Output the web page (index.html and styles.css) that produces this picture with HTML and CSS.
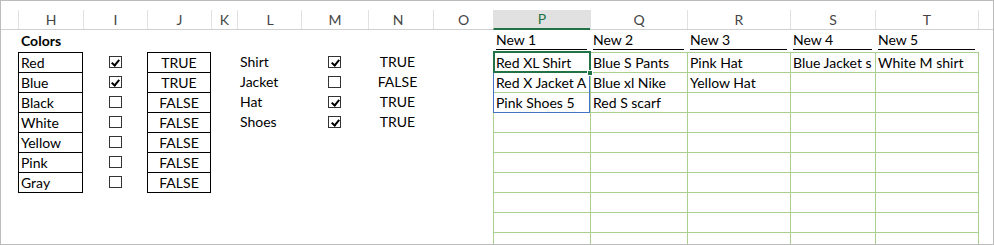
FILE: index.html
```html
<!DOCTYPE html>
<html lang="en">
<head>
    <meta charset="UTF-8">
    <title>Colors</title>
    <link rel="stylesheet" href="styles.css">
</head>
<body>

<div class="sheet">
    <!-- column letters -->
    <div class="row head">
        <div class="c0"></div>
        <div class="h">H</div>
        <div class="i">I</div>
        <div class="j">J</div>
        <div class="k">K</div>
        <div class="l">L</div>
        <div class="m">M</div>
        <div class="n">N</div>
        <div class="o">O</div>
        <div class="p current">P</div>
        <div class="q">Q</div>
        <div class="r">R</div>
        <div class="s">S</div>
        <div class="t">T</div>
        <div class="u"></div>
    </div>

    <div class="row top">
        <div class="h title">Colors</div>
        <div class="p"><span class="hd">New 1</span></div>
        <div class="q"><span class="hd">New 2</span></div>
        <div class="r"><span class="hd">New 3</span></div>
        <div class="s"><span class="hd">New 4</span></div>
        <div class="t"><span class="hd">New 5</span></div>
    </div>

    <div class="row">
        <div class="h box">Red</div>
        <div class="i"><span class="cb on"></span></div>
        <div class="j box">TRUE</div>
        <div class="l">Shirt</div>
        <div class="m"><span class="cb on"></span></div>
        <div class="n">TRUE</div>
        <div class="p g active">
            Red XL Shirt
            <span class="range"></span>
            <span class="cursor"></span>
            <span class="handle"></span>
        </div>
        <div class="q g">Blue S Pants</div>
        <div class="r g">Pink Hat</div>
        <div class="s g">Blue Jacket s</div>
        <div class="t g">White M shirt</div>
    </div>

    <div class="row">
        <div class="h box">Blue</div>
        <div class="i"><span class="cb on"></span></div>
        <div class="j box">TRUE</div>
        <div class="l">Jacket</div>
        <div class="m"><span class="cb"></span></div>
        <div class="n">FALSE</div>
        <div class="p g">Red X Jacket A</div>
        <div class="q g">Blue xl Nike</div>
        <div class="r g">Yellow Hat</div>
        <div class="s g"></div>
        <div class="t g"></div>
    </div>

    <div class="row">
        <div class="h box">Black</div>
        <div class="i"><span class="cb"></span></div>
        <div class="j box">FALSE</div>
        <div class="l">Hat</div>
        <div class="m"><span class="cb on"></span></div>
        <div class="n">TRUE</div>
        <div class="p g">Pink Shoes 5</div>
        <div class="q g">Red S scarf</div>
        <div class="r g"></div>
        <div class="s g"></div>
        <div class="t g"></div>
    </div>

    <div class="row">
        <div class="h box">White</div>
        <div class="i"><span class="cb"></span></div>
        <div class="j box">FALSE</div>
        <div class="l">Shoes</div>
        <div class="m"><span class="cb on"></span></div>
        <div class="n">TRUE</div>
        <div class="p g"></div>
        <div class="q g"></div>
        <div class="r g"></div>
        <div class="s g"></div>
        <div class="t g"></div>
    </div>

    <div class="row">
        <div class="h box">Yellow</div>
        <div class="i"><span class="cb"></span></div>
        <div class="j box">FALSE</div>
        <div class="p g"></div>
        <div class="q g"></div>
        <div class="r g"></div>
        <div class="s g"></div>
        <div class="t g"></div>
    </div>

    <div class="row">
        <div class="h box">Pink</div>
        <div class="i"><span class="cb"></span></div>
        <div class="j box">FALSE</div>
        <div class="p g"></div>
        <div class="q g"></div>
        <div class="r g"></div>
        <div class="s g"></div>
        <div class="t g"></div>
    </div>

    <div class="row">
        <div class="h box end">Gray</div>
        <div class="i"><span class="cb"></span></div>
        <div class="j box end">FALSE</div>
        <div class="p g"></div>
        <div class="q g"></div>
        <div class="r g"></div>
        <div class="s g"></div>
        <div class="t g"></div>
    </div>

    <div class="row">
        <div class="p g"></div>
        <div class="q g"></div>
        <div class="r g"></div>
        <div class="s g"></div>
        <div class="t g"></div>
    </div>

    <div class="row">
        <div class="p g"></div>
        <div class="q g"></div>
        <div class="r g"></div>
        <div class="s g"></div>
        <div class="t g"></div>
    </div>

    <div class="row">
        <div class="p g"></div>
        <div class="q g"></div>
        <div class="r g"></div>
        <div class="s g"></div>
        <div class="t g"></div>
    </div>
</div>

</body>
</html>
```

FILE: styles.css
```css
* {
    box-sizing: border-box;
    margin: 0;
    padding: 0;
}

body {
    font-family: Lato, "Liberation Sans", sans-serif;
    font-size: 14px;
    color: #000;
    background: #fff;
}

.sheet {
    width: 994px;
    height: 245px;
    border: 1px solid #bcbcbc;
    padding-top: 9px;
    overflow: hidden;
}

/* every row shares the same column widths */
.row {
    display: grid;
    grid-template-columns: 17px 65px 64px 64px 26px 64px 67px 65px 60px 97px 97px 103px 85px 103px 1fr;
    height: 20px;
}

.row > div {
    display: flex;
    align-items: center;
    white-space: nowrap;
    padding: 0 2px;
    line-height: 1;
}

.c0 { grid-column: 1; }
.h  { grid-column: 2; }
.i  { grid-column: 3; }
.j  { grid-column: 4; }
.k  { grid-column: 5; }
.l  { grid-column: 6; }
.m  { grid-column: 7; }
.n  { grid-column: 8; }
.o  { grid-column: 9; }
.p  { grid-column: 10; }
.q  { grid-column: 11; }
.r  { grid-column: 12; }
.s  { grid-column: 13; }
.t  { grid-column: 14; }
.u  { grid-column: 15; }

/* Column header */
.head {
    border-bottom: 1px solid #d0d0d0;
}

.head > div {
    justify-content: center;
    border-left: 1px solid #e1e1e1;
    color: #444;
    font-size: 14px;
}

.head > .c0 { border-left: none; }

.head > .current {
    background: #e1e1e1;
    color: #217346;
    border-bottom: 2px solid #217346;
    margin-bottom: -1px;
}

/* Title row */
.row.top {
    height: 22px;
}

.row.top > div {
    align-items: flex-end;
    padding: 0 3px 2px;
}

.title {
    font-weight: bold;
    align-self: center;
    padding-bottom: 0 !important;
}

.hd {
    flex: 1;
    line-height: 18px;
    border-bottom: 1px solid #000;
}

/* Boxed list cells */
.box {
    border: 1px solid #000;
    border-bottom: none;
}

.box.end {
    border-bottom: 1px solid #000;
    margin-bottom: -1px;
}

.j, .n { justify-content: center; }
.n { padding-right: 8px !important; }
.l { padding-left: 3px !important; }
.i, .m { justify-content: center; }

/* Check boxes */
.cb {
    position: relative;
    width: 13px;
    height: 12px;
    border: 1px solid #333;
    background: #fff;
}

.cb.on::after {
    content: "";
    position: absolute;
    left: 3.5px;
    top: 0.5px;
    width: 3px;
    height: 6px;
    border: solid #000;
    border-width: 0 2px 2px 0;
    transform: rotate(40deg);
}

/* Green table grid */
.g {
    border-left: 1px solid #a9d08e;
    border-top: 1px solid #a9d08e;
}

.t.g {
    border-right: 1px solid #a9d08e;
    margin-right: -1px;
}

/* Selection */
.active {
    position: relative;
}

.range {
    position: absolute;
    left: -1px;
    top: -1px;
    width: 97px;
    height: 61px;
    border: 1px solid #4472c4;
}

.cursor {
    position: absolute;
    left: -1px;
    top: -2px;
    width: 98px;
    height: 22px;
    border: 2px solid #217346;
}

.handle {
    position: absolute;
    left: 93px;
    top: 17px;
    width: 6px;
    height: 6px;
    background: #217346;
    border: 1px solid #fff;
}
```
